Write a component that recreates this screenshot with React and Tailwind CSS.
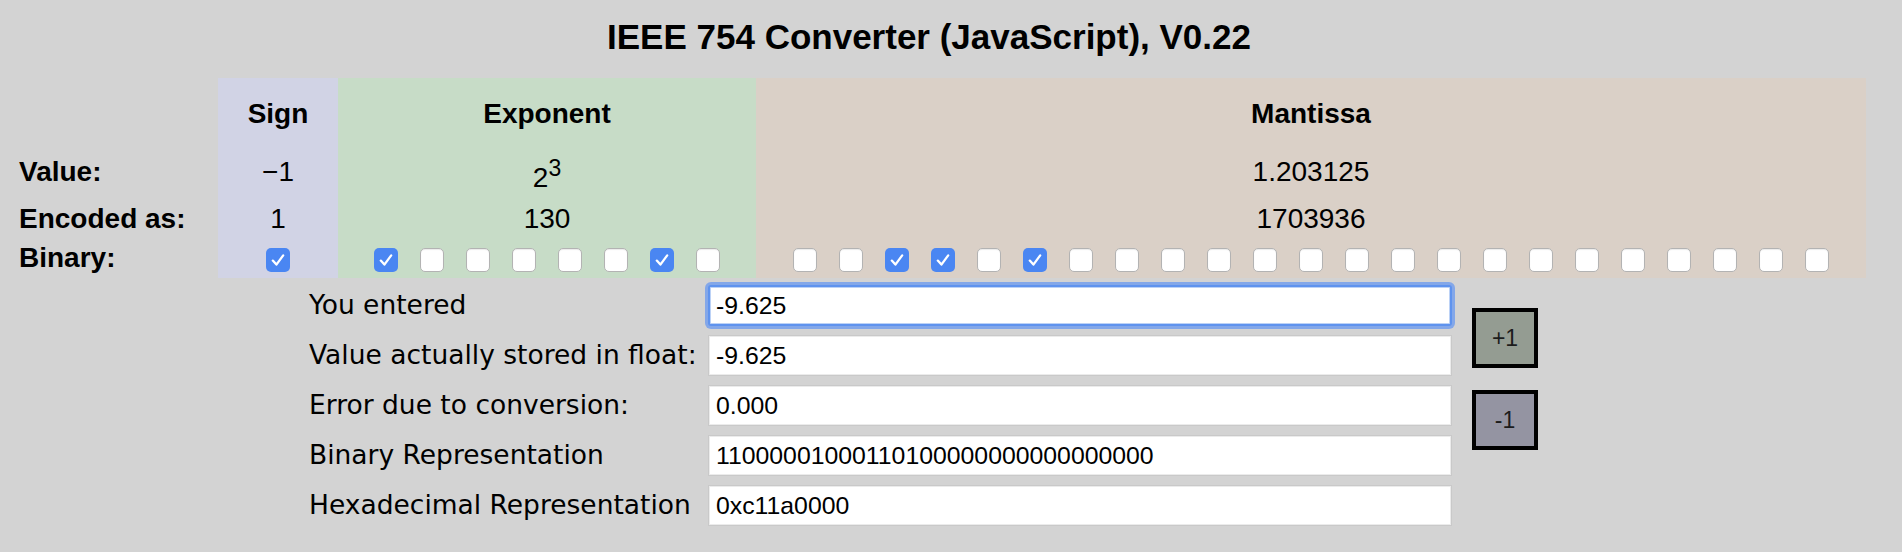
import React from "react";

const Check = () => (
  <svg viewBox="0 0 24 24" className="w-full h-full" fill="none">
    <path d="M6.8 12.6 L10.4 16.6 L17.2 7.4" stroke="white" strokeWidth="2.3" strokeLinecap="round" strokeLinejoin="round" />
  </svg>
);

function Box({ on }) {
  return on ? (
    <span className="block w-[24px] h-[24px] rounded-[5px] bg-[#4a86f2]">
      <Check />
    </span>
  ) : (
    <span className="block w-[24px] h-[24px] rounded-[5px] bg-white border border-[#b3b3b3] shadow-[inset_0_1px_1px_rgba(0,0,0,0.08)]" />
  );
}

function Bits({ bits }) {
  return (
    <div className="h-full flex items-end justify-center gap-[22px] pb-[6px]">
      {bits.split("").map((b, i) => (
        <Box key={i} on={b === "1"} />
      ))}
    </div>
  );
}

const rows = [
  ["You entered", "-9.625", true],
  ["Value actually stored in float:", "-9.625", false],
  ["Error due to conversion:", "0.000", false],
  ["Binary Representation", "11000001000110100000000000000000", false],
  ["Hexadecimal Representation", "0xc11a0000", false],
];

export default function App() {
  return (
    <div className="min-h-[552px] bg-[#d3d3d3] text-black font-['Liberation_Sans',Arial,sans-serif]">
      <h1 className="w-[1858px] pt-[19px] text-center text-[35px] leading-[35px] font-bold">
        IEEE 754 Converter (JavaScript), V0.22
      </h1>

      <div className="mt-[24px] grid grid-cols-[218px_120px_418px_1110px] grid-rows-[66px_56px_38px_40px] text-[28px] leading-none">
        {/* header row */}
        <div />
        <div className="bg-[#d1d3e5] flex items-center justify-center pt-[5px] font-bold">Sign</div>
        <div className="bg-[#c7dcc7] flex items-center justify-center pt-[5px] font-bold">Exponent</div>
        <div className="bg-[#dad0c7] flex items-center justify-center pt-[5px] font-bold">Mantissa</div>

        {/* value row */}
        <div className="flex items-center pl-[19px] font-bold">Value:</div>
        <div className="bg-[#d1d3e5] flex items-center justify-center">−1</div>
        <div className="bg-[#c7dcc7] flex items-center justify-center pt-[12px]">
          <span>
            2<sup className="text-[23px]">3</sup>
          </span>
        </div>
        <div className="bg-[#dad0c7] flex items-center justify-center">1.203125</div>

        {/* encoded row */}
        <div className="flex items-center pl-[19px] font-bold">Encoded as:</div>
        <div className="bg-[#d1d3e5] flex items-center justify-center">1</div>
        <div className="bg-[#c7dcc7] flex items-center justify-center">130</div>
        <div className="bg-[#dad0c7] flex items-center justify-center">1703936</div>

        {/* binary row */}
        <div className="flex items-center pl-[19px] font-bold">Binary:</div>
        <div className="bg-[#d1d3e5]">
          <Bits bits="1" />
        </div>
        <div className="bg-[#c7dcc7]">
          <Bits bits="10000010" />
        </div>
        <div className="bg-[#dad0c7]">
          <Bits bits="00110100000000000000000" />
        </div>
      </div>

      <div className="mt-[7px] pl-[309px] flex items-start">
        <div className="grid grid-cols-[399px_744px] gap-y-[9px]">
          {rows.map(([label, value, focused]) => (
            <React.Fragment key={label}>
              <div className="h-[41px] flex items-center font-['DejaVu_Sans',sans-serif] text-[26.5px] leading-none whitespace-nowrap">
                {label}
              </div>
              <input
                readOnly
                value={value}
                className={
                  focused
                    ? "h-[41px] w-[744px] px-[6px] bg-white rounded-[3px] border-2 border-[#5f93ee] shadow-[0_0_0_3px_rgba(104,152,240,0.75),inset_0_0_0_1px_#bcd2f6] outline-none text-[24.8px] font-['Liberation_Sans',Arial,sans-serif] text-black"
                    : "h-[41px] w-[744px] px-[7px] bg-white border border-[#c9c9c9] shadow-[inset_0_0_0_1px_#ebebeb] outline-none text-[24.8px] font-['Liberation_Sans',Arial,sans-serif] text-black"
                }
              />
            </React.Fragment>
          ))}
        </div>
        <div className="ml-[20px] pt-[23px] flex flex-col gap-[22px]">
          <button className="w-[66px] h-[60px] border-4 border-black bg-[#949c92] text-[23px] text-[#1c1c1c] flex items-center justify-center">
            +1
          </button>
          <button className="w-[66px] h-[60px] border-4 border-black bg-[#9494a2] text-[23px] text-[#1c1c1c] flex items-center justify-center">
            -1
          </button>
        </div>
      </div>
    </div>
  );
}
